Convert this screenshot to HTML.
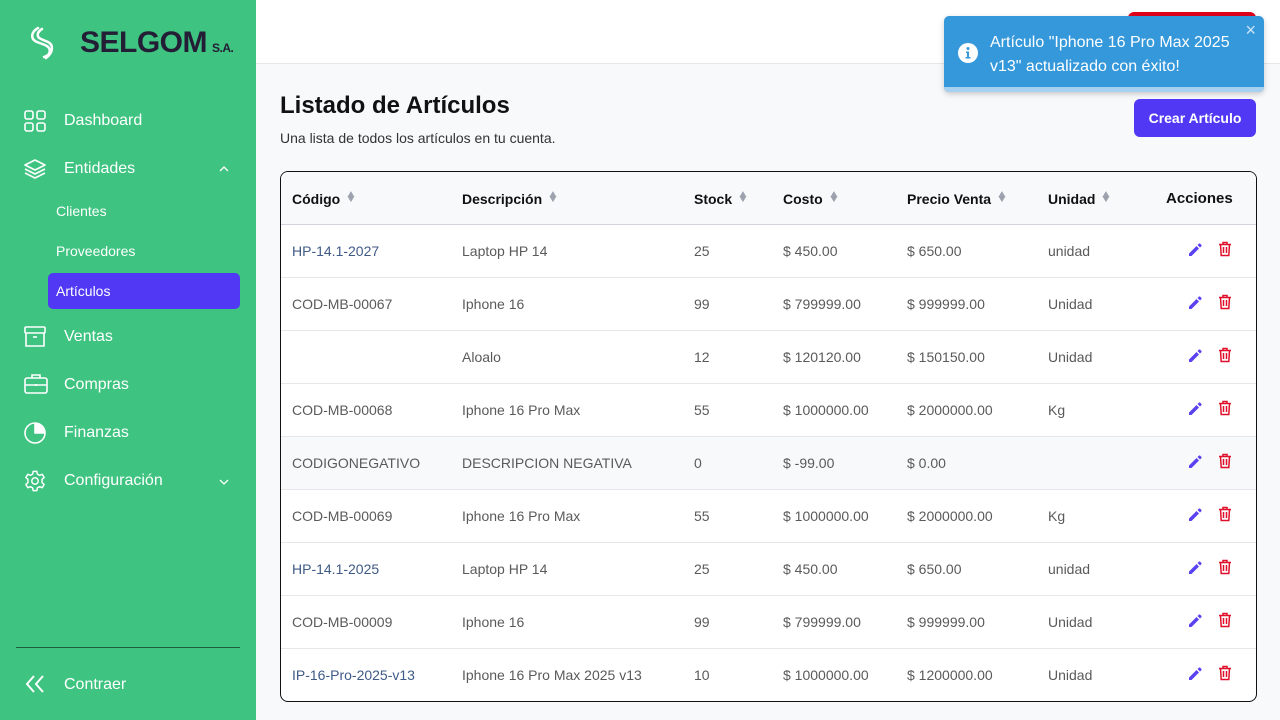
<!DOCTYPE html>
<html><head><meta charset="utf-8"><style>
*{box-sizing:border-box;margin:0;padding:0}
body{width:1280px;height:720px;overflow:hidden;font-family:"Liberation Sans","DejaVu Sans",sans-serif;background:#f8f9fb;position:relative}
.sb{position:absolute;left:0;top:0;width:256px;height:720px;background:#3ec380;color:#fff}
.logo{position:absolute;left:80px;top:26px;font-size:30px;font-weight:900;color:#231d35;letter-spacing:-0.5px}
.logo small{font-size:12px;font-weight:900;margin-left:5px}
.nav{position:absolute;left:64px;font-size:16px}
.ic{position:absolute;left:24px}
.sub{position:absolute;left:56px;font-size:14px}
.act{position:absolute;left:48px;top:273px;width:192px;height:36px;background:#5038f5;border-radius:5px}
.top{position:absolute;left:256px;top:0;width:1024px;height:64px;background:#fff;border-bottom:1px solid #e5e7eb}
h1{position:absolute;left:280px;top:92px;font-size:24px;font-weight:600;color:#111}
.desc{position:absolute;left:280px;top:130px;font-size:14px;color:#333}
.btn{position:absolute;left:1134px;top:99px;width:122px;height:38px;background:#5038f5;border-radius:6px;color:#fff;font-size:14px;font-weight:bold;text-align:center;line-height:38px}
.tb{position:absolute;left:280px;top:171px;width:977px;height:531px;border:1px solid #111;border-radius:8px;background:#fff;overflow:hidden}
.row{position:absolute;left:0;width:975px;height:53px;border-bottom:1px solid #e5e7eb;font-size:14px;color:#5a5a5a}
.row span{position:absolute;top:18px}
.hd{background:#f8f9fb;border-bottom:1px solid #d1d5db;color:#111;font-weight:bold}
.hd span{top:19px}
.ar{display:inline-block;margin-left:6px;color:#9ca3af;font-size:10px;line-height:5px;vertical-align:2px;transform:scaleX(1.2)}
.toast{position:absolute;left:944px;top:16px;width:320px;height:76px;background:#3498db;border-radius:5px;color:#fff;font-size:16px;box-shadow:0 2px 6px rgba(0,0,0,.2);overflow:hidden}
</style></head><body>
<div class="sb">
<svg style="position:absolute;left:28px;top:26px" width="28" height="34" viewBox="0 0 28 34" fill="none" stroke="#fff" stroke-width="2.5" stroke-linecap="round"><path d="M10 2C3 6 2 13 9 16L17 19C24 22 23 29 16 31"/><path d="M14 3C9 6 8 11 13 13L20 16C26 19 25 27 18 32"/></svg>
<div class="logo">SELGOM<small>S.A.</small></div>
<svg class="ic" style="top:110px" width="22" height="22" viewBox="0 0 22 22" fill="none" stroke="#fff" stroke-width="1.6"><rect x="1" y="1" width="8" height="8" rx="2"/><rect x="13" y="1" width="8" height="8" rx="2"/><rect x="1" y="13" width="8" height="8" rx="2"/><rect x="13" y="13" width="8" height="8" rx="2"/></svg>
<div class="nav" style="top:112px">Dashboard</div>
<svg class="ic" style="top:158px" width="22" height="22" viewBox="0 0 22 22" fill="none" stroke="#fff" stroke-width="1.6" stroke-linejoin="round"><path d="M11 2L21 7L11 12L1 7Z"/><path d="M1 11L11 16L21 11"/><path d="M1 15L11 20L21 15"/></svg>
<div class="nav" style="top:160px">Entidades</div>
<svg style="position:absolute;left:218px;top:165px" width="12" height="8" viewBox="0 0 12 8" fill="none" stroke="#fff" stroke-width="1.3"><path d="M2 6L6 2L10 6"/></svg>
<div class="sub" style="top:203px">Clientes</div>
<div class="sub" style="top:243px">Proveedores</div>
<div class="act"></div>
<div class="sub" style="top:283px">Artículos</div>
<svg class="ic" style="top:326px" width="22" height="22" viewBox="0 0 22 22" fill="none" stroke="#fff" stroke-width="1.6"><rect x="1" y="1" width="20" height="6" rx="1"/><path d="M2 7V20H20V7"/><path d="M9 11H13"/></svg>
<div class="nav" style="top:328px">Ventas</div>
<svg class="ic" style="top:373px" width="24" height="22" viewBox="0 0 24 22" fill="none" stroke="#fff" stroke-width="1.6"><rect x="1" y="5" width="22" height="15" rx="2"/><path d="M8 5V2H16V5"/><path d="M1 12H23M12 11V13"/></svg>
<div class="nav" style="top:376px">Compras</div>
<svg class="ic" style="top:422px" width="22" height="22" viewBox="0 0 22 22" fill="none" stroke="#fff" stroke-width="1.6"><circle cx="11" cy="11" r="10"/><path d="M11 2A9 9 0 0 1 20 11H11Z" fill="#fff"/></svg>
<div class="nav" style="top:424px">Finanzas</div>
<svg class="ic" style="top:470px" width="22" height="22" viewBox="0 0 24 24" fill="none" stroke="#fff" stroke-width="1.6"><circle cx="12" cy="12" r="3.5"/><path d="M10 1.5H14L14.6 4.5L17 5.8L19.8 4.7L22 8.2L19.7 10.2V13.8L22 15.8L19.8 19.3L17 18.2L14.6 19.5L14 22.5H10L9.4 19.5L7 18.2L4.2 19.3L2 15.8L4.3 13.8V10.2L2 8.2L4.2 4.7L7 5.8L9.4 4.5Z" stroke-linejoin="round"/></svg>
<div class="nav" style="top:472px">Configuración</div>
<svg style="position:absolute;left:218px;top:478px" width="12" height="8" viewBox="0 0 12 8" fill="none" stroke="#fff" stroke-width="1.3"><path d="M2 2L6 6L10 2"/></svg>
<div style="position:absolute;left:16px;top:647px;width:224px;height:1px;background:#1f5f3f"></div>
<svg class="ic" style="top:674px" width="22" height="20" viewBox="0 0 22 20" fill="none" stroke="#fff" stroke-width="2"><path d="M10 2L3 10L10 18M19 2L12 10L19 18"/></svg>
<div class="nav" style="top:676px">Contraer</div>
</div>
<div class="top"><div style="position:absolute;left:872px;top:12px;width:128px;height:30px;background:#e0001b;border-radius:6px"></div></div>
<h1>Listado de Artículos</h1>
<div class="desc">Una lista de todos los artículos en tu cuenta.</div>
<div class="btn">Crear Artículo</div>
<div class="tb">
<div class="row hd" style="top:0"><span style="left:11px">Código<i class="ar">▲<br>▼</i></span><span style="left:181px">Descripción<i class="ar">▲<br>▼</i></span><span style="left:413px">Stock<i class="ar">▲<br>▼</i></span><span style="left:502px">Costo<i class="ar">▲<br>▼</i></span><span style="left:626px">Precio Venta<i class="ar">▲<br>▼</i></span><span style="left:767px">Unidad<i class="ar">▲<br>▼</i></span><span style="left:885px;font-size:15px;top:18px">Acciones</span></div>
<div id="rows"></div>
</div>
<div class="toast">
<svg style="position:absolute;left:14px;top:27px" width="20" height="20" viewBox="0 0 20 20"><circle cx="10" cy="10" r="10" fill="#fff"/><circle cx="10" cy="5.5" r="1.5" fill="#3498db"/><path d="M8 8.5H11V14H12.5V15.5H7.5V14H9V10H8Z" fill="#3498db"/></svg>
<div style="position:absolute;left:46px;top:15px;line-height:24px">Artículo "Iphone 16 Pro Max 2025<br>v13" actualizado con éxito!</div>
<div style="position:absolute;right:8px;top:4px;font-size:18px;color:#cfe6f7">×</div>
<div style="position:absolute;left:0;bottom:0;width:100%;height:5px;background:#a6d1f0"></div>
</div>
<script>
var d=[["HP-14.1-2027","Laptop HP 14","25","$ 450.00","$ 650.00","unidad",1],["COD-MB-00067","Iphone 16","99","$ 799999.00","$ 999999.00","Unidad"],["","Aloalo","12","$ 120120.00","$ 150150.00","Unidad"],["COD-MB-00068","Iphone 16 Pro Max","55","$ 1000000.00","$ 2000000.00","Kg"],["CODIGONEGATIVO","DESCRIPCION NEGATIVA","0","$ -99.00","$ 0.00",""],["COD-MB-00069","Iphone 16 Pro Max","55","$ 1000000.00","$ 2000000.00","Kg"],["HP-14.1-2025","Laptop HP 14","25","$ 450.00","$ 650.00","unidad",1],["COD-MB-00009","Iphone 16","99","$ 799999.00","$ 999999.00","Unidad"],["IP-16-Pro-2025-v13","Iphone 16 Pro Max 2025 v13","10","$ 1000000.00","$ 1200000.00","Unidad",1]];
var L=[11,181,413,502,626,767],h="";
d.forEach(function(r,i){h+='<div class="row" style="top:'+(53*(i+1))+'px;'+(i==4?'background:#f8f9fb;':'')+(i==8?'border-bottom:none;':'')+'">';
for(var j=0;j<6;j++)h+='<span style="left:'+L[j]+'px;'+(j==0&&r[6]?'color:#3f5a86':'')+'">'+r[j]+'</span>';
h+='<svg style="position:absolute;left:906px;top:17px" width="16" height="16" viewBox="0 0 16 16"><path d="M2 11.5L2 14L4.5 14L12 6.5L9.5 4Z M10.5 3L13 5.5L14.3 4.2A1 1 0 0 0 14.3 2.8L13.2 1.7A1 1 0 0 0 11.8 1.7Z" fill="#5a42f0"/></svg>';
h+='<svg style="position:absolute;left:937px;top:16px" width="14" height="16" viewBox="0 0 14 16" fill="none" stroke="#e0102a" stroke-width="1.5"><path d="M1 3.5H13M5 3.5V1.5H9V3.5M2.5 3.5L3.2 14.5H10.8L11.5 3.5M5.5 6V12M8.5 6V12"/></svg></div>';});
document.getElementById('rows').innerHTML=h;
</script>
</body></html>
